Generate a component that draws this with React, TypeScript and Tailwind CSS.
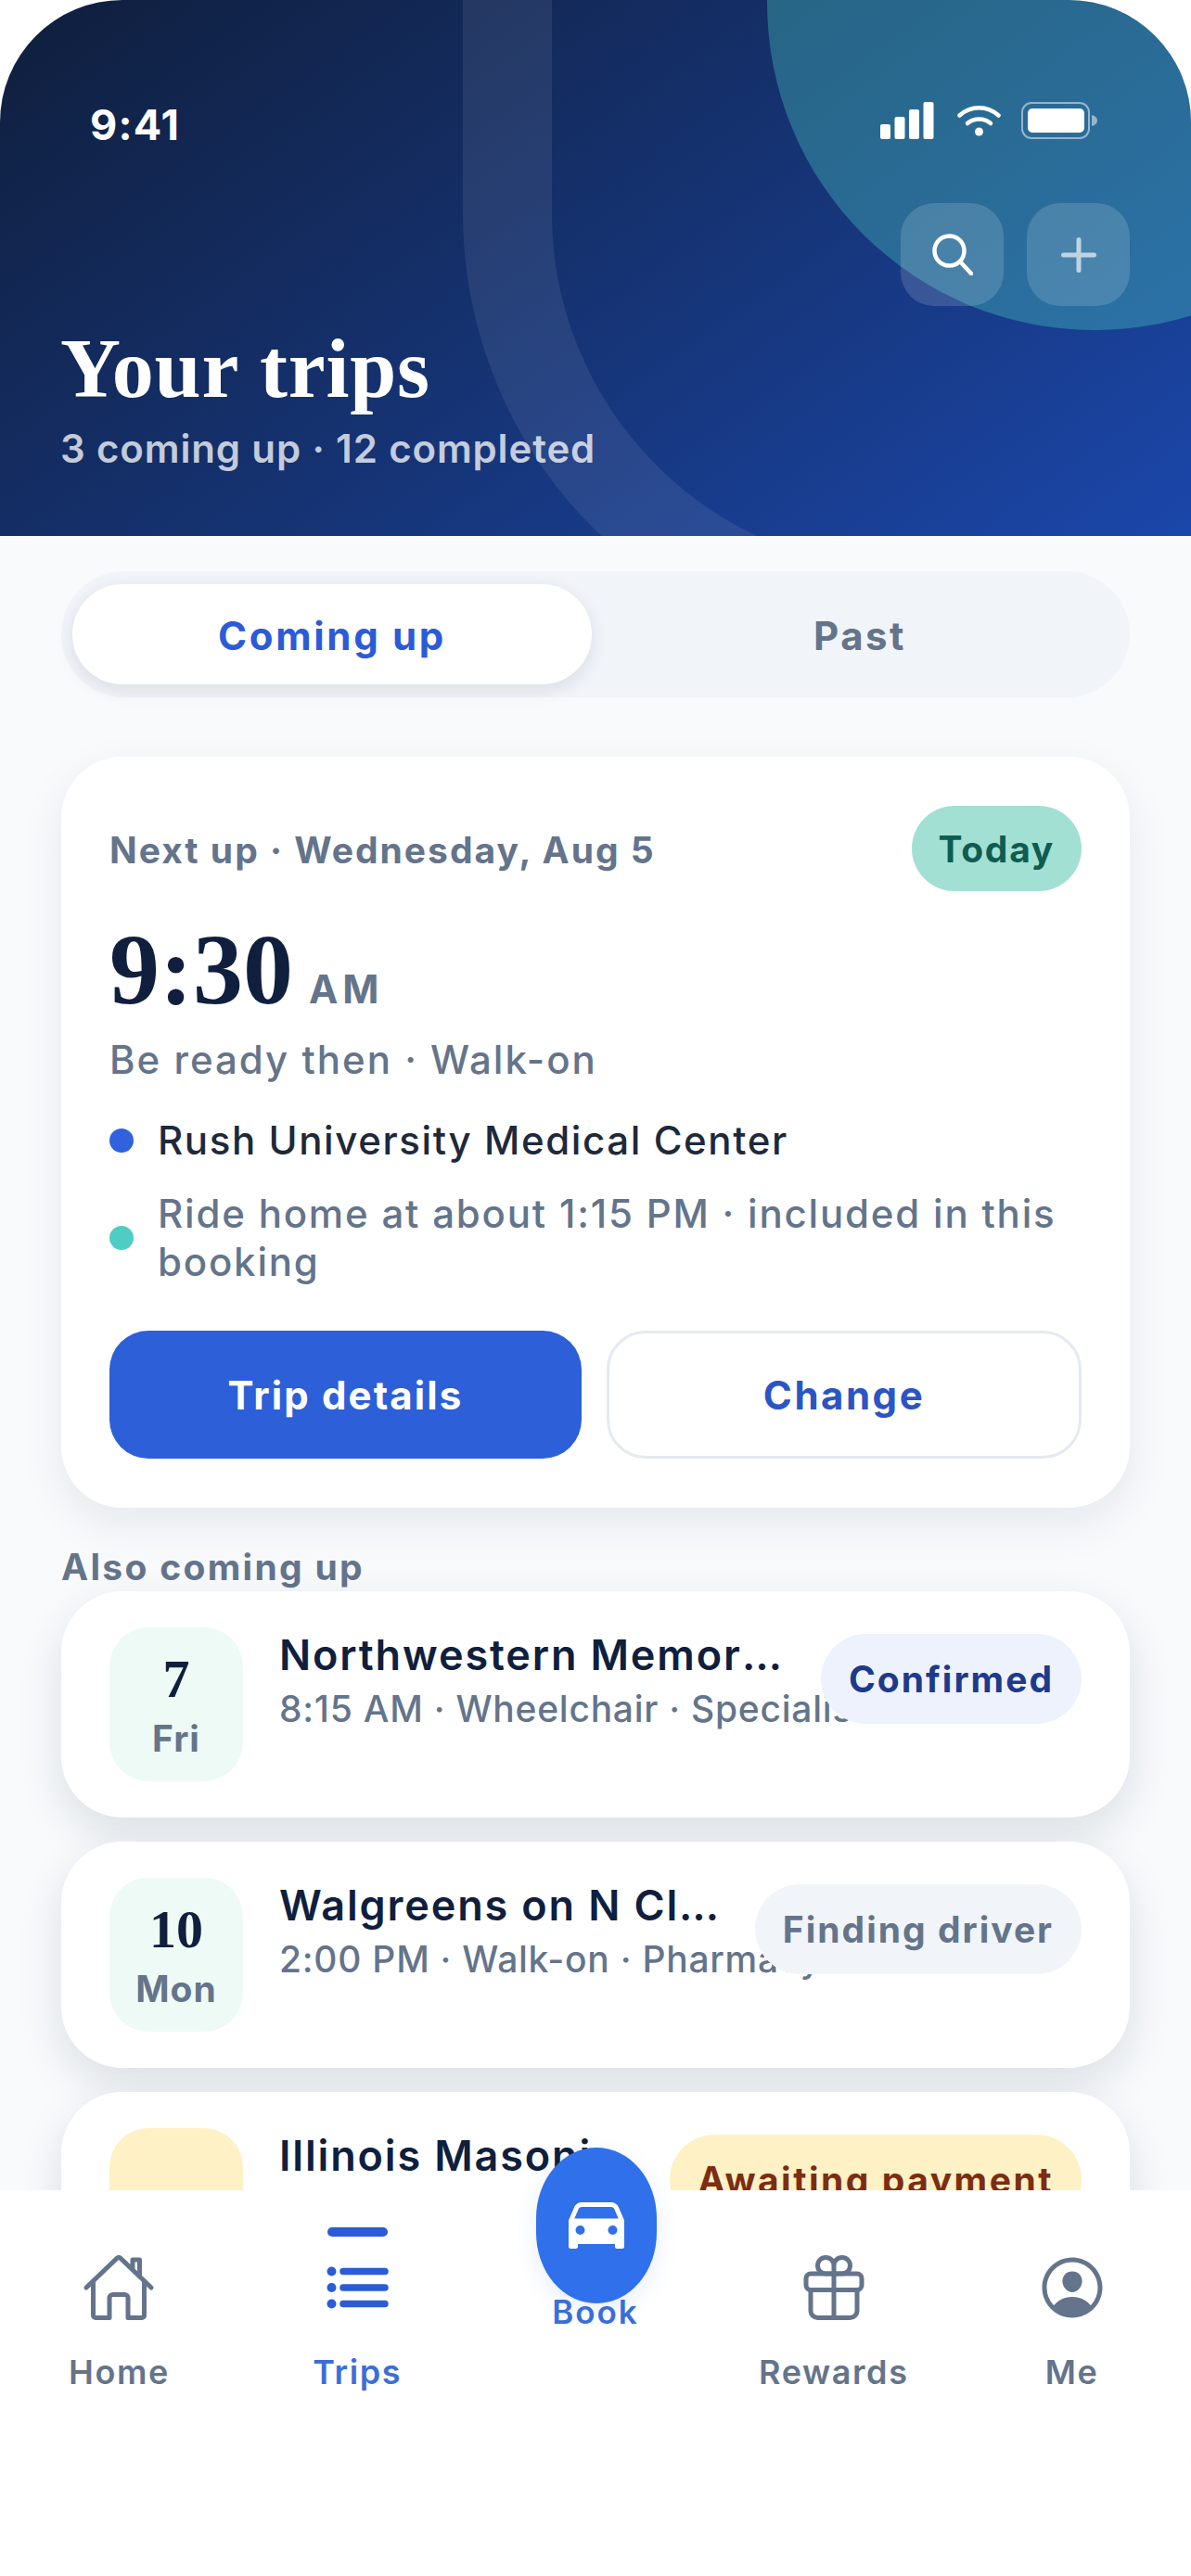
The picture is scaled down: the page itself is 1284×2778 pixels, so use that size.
import { IoCar, IoGiftOutline, IoHomeOutline, IoList, IoPersonCircleOutline } from 'react-icons/io5';
import type { IconType } from 'react-icons';

const sans = "font-['Inter','Liberation_Sans',sans-serif]";
const serif = "font-['Liberation_Serif',serif]";

interface TripRow {
  day?: string;
  weekday?: string;
  title: string;
  detail?: string;
  status: string;
  boxClass: string;
  pillClass: string;
}

const trips: TripRow[] = [
  {
    day: '7',
    weekday: 'Fri',
    title: 'Northwestern Memorial Hospital',
    detail: '8:15 AM · Wheelchair · Specialist',
    status: 'Confirmed',
    boxClass: 'bg-[#eefaf5]',
    pillClass: 'bg-[#eef2fd] text-[#1e3a8a] tracking-[2px]',
  },
  {
    day: '10',
    weekday: 'Mon',
    title: 'Walgreens on N Clark Street',
    detail: '2:00 PM · Walk-on · Pharmacy',
    status: 'Finding driver',
    boxClass: 'bg-[#eefaf5]',
    pillClass: 'bg-[#f1f4f9] text-[#64748b] tracking-[2px]',
  },
  {
    title: 'Illinois Masonic Medical Center',
    status: 'Awaiting payment',
    boxClass: 'bg-[#fdf1c5]',
    pillClass: 'bg-[#fdf1c5] text-[#7c2d12] tracking-[2.5px]',
  },
];

function StatusIcons() {
  return (
    <div className="flex items-center">
      <svg width="58" height="40" viewBox="0 0 58 40" fill="white">
        <rect x="0" y="24" width="11" height="16" rx="2" />
        <rect x="15.5" y="16" width="11" height="24" rx="2" />
        <rect x="31" y="8" width="11" height="32" rx="2" />
        <rect x="46.5" y="0" width="11" height="40" rx="2" />
      </svg>
      <svg className="ml-[25px]" width="47" height="35" viewBox="0 0 47 35" fill="none" stroke="white" strokeWidth="4.5" strokeLinecap="round">
        <path d="M2.5 11.5C14.5 .5 32.5 .5 44.5 11.5" />
        <path d="M11 20c7-6 18-6 25 0" />
        <circle cx="23.5" cy="29" r="4.5" fill="white" stroke="none" />
      </svg>
      <svg className="ml-[22px]" width="82" height="40" viewBox="0 0 82 40" fill="none">
        <rect x="1" y="1" width="72" height="38" rx="10" stroke="white" strokeOpacity="0.5" strokeWidth="2" />
        <rect x="7" y="7" width="61" height="26" rx="5" fill="white" />
        <path d="M76 14c4 1 6 3 6 6s-2 5-6 6z" fill="white" fillOpacity="0.5" />
      </svg>
    </div>
  );
}

function Trip({ trip }: { trip: TripRow }) {
  return (
    <div className="flex items-start gap-[30px] rounded-[66px] bg-white p-[39px_52px] shadow-[0_18px_48px_rgba(15,31,61,0.12)]">
      <div className={`mr-[9px] flex h-[166px] w-[144px] shrink-0 flex-col items-center rounded-[42px] pt-[25px] ${trip.boxClass}`}>
        <span className={`${serif} text-[58px] leading-[62px] font-bold text-[#0f1f3d]`}>{trip.day}</span>
        <span className="mt-[9px] text-[39px] leading-[48px] font-bold tracking-[1px] text-[#64748b]">{trip.weekday}</span>
      </div>
      <div className="min-w-0 flex-1 pt-[3px]">
        <div className="truncate text-[45px] leading-[54px] font-semibold tracking-[1.85px] text-[#0f1f3d]">{trip.title}</div>
        <div className="mt-[5px] text-[39px] leading-[52px] font-medium tracking-[0.75px] whitespace-nowrap text-[#64748b]">{trip.detail}</div>
      </div>
      <div className={`relative mt-[7px] flex h-[97px] shrink-0 items-center rounded-full px-[30px] pt-[2px] text-[39px] font-bold ${trip.pillClass}`}>
        {trip.status}
      </div>
    </div>
  );
}

function NavItem({ label, Icon, active }: { label: string; Icon: IconType; active?: boolean }) {
  return (
    <div className={`relative flex flex-col items-center pt-[63px] ${active ? 'text-[#2b5bd7]' : 'text-[#64748b]'}`}>
      {active ? <div className="absolute top-[40px] h-[10px] w-[65px] rounded-full bg-[#2b5bd7]" /> : null}
      <div className="flex h-[84px] items-center justify-center">
        <Icon size={80} />
      </div>
      <span className={`mt-[27px] text-[36px] leading-[44px] font-semibold tracking-[1.6px] ${active ? 'text-[#3b6fd8]' : ''}`}>{label}</span>
    </div>
  );
}

export default function App() {
  return (
    <div className="bg-white">
      <div className={`${sans} relative flex h-[2778px] w-[1284px] flex-col overflow-hidden rounded-[132px] bg-[#f8fafc]`}>
        <header className="relative h-[578px] shrink-0 overflow-hidden bg-linear-145 from-[#0f1e3c] to-[#1b47ab]">
          <div className="absolute top-[-300px] left-[499px] h-[1010px] w-[1200px] rounded-bl-[480px] border-[96px] border-white/[0.08]" />
          <div className="absolute top-[-350px] left-[827px] h-[706px] w-[706px] rounded-full bg-[#4ecdc4]/35" />

          <div className="relative flex h-[222px] items-start justify-between pt-[110px] pr-[101px] pl-[97px]">
            <span className="text-[45px] leading-[50px] font-bold tracking-[1.2px] text-white">9:41</span>
            <StatusIcons />
          </div>

          <div className="relative -mt-[3px] flex justify-end gap-[25px] pr-[66px]">
            <button type="button" className="flex h-[111px] w-[111px] items-center justify-center rounded-[36px] bg-white/[0.15]">
              <svg width="44" height="45" viewBox="0 0 44 45" fill="none" stroke="white" strokeWidth="4.5" strokeLinecap="round">
                <circle cx="18.5" cy="18.5" r="16" />
                <path d="M30 30l12 13" />
              </svg>
            </button>
            <button type="button" className="flex h-[111px] w-[111px] items-center justify-center rounded-[36px] bg-white/[0.15]">
              <svg width="38" height="38" viewBox="0 0 38 38" fill="none" stroke="white" strokeOpacity="0.65" strokeWidth="5" strokeLinecap="round">
                <path d="M19 2.5v33M2.5 19h33" />
              </svg>
            </button>
          </div>

          <div className="relative pl-[65px]">
            <h1 className={`${serif} mt-[13px] text-[90px] leading-[110px] font-bold tracking-[0.8px] text-white`}>Your trips</h1>
            <p className="mt-[6px] text-[42px] leading-[50px] font-semibold tracking-[0.85px] text-white/75">3 coming up · 12 completed</p>
          </div>
        </header>

        <main className="min-h-0 flex-1 overflow-hidden px-[66px] pt-[38px]">
          <div className="grid grid-cols-[560px_1fr] rounded-full bg-[#f1f4f9] px-[12px] py-[14px]">
            <div className="flex h-[108px] items-center justify-center rounded-full bg-white pt-[3px] text-[42px] font-bold tracking-[2.7px] text-[#2b5bd7] shadow-[0_6px_20px_rgba(15,31,61,0.1)]">
              Coming up
            </div>
            <div className="flex h-[108px] items-center justify-center pt-[3px] pl-[10px] text-[42px] font-bold tracking-[2.5px] text-[#64748b]">Past</div>
          </div>

          <section className="mt-[64px] rounded-[66px] bg-white p-[53px_52px] shadow-[0_18px_48px_rgba(15,31,61,0.08)]">
            <div className="flex items-center justify-between">
              <span className="pt-[4px] text-[39px] font-bold tracking-[2px] text-[#64748b]">Next up · Wednesday, Aug 5</span>
              <span className="flex h-[92px] items-center rounded-full bg-[#a3e0d4] px-[29px] pt-[3px] text-[39px] font-bold tracking-[1.7px] text-[#0f5c50]">Today</span>
            </div>
            <div className="mt-[23px] flex items-baseline gap-[17px]">
              <span className={`${serif} text-[108px] leading-[124px] font-bold text-[#0f1f3d]`}>9:30</span>
              <span className="text-[42px] font-bold tracking-[5px] text-[#64748b]">AM</span>
            </div>
            <p className="mt-[8px] text-[42px] leading-[54px] font-medium tracking-[2px] text-[#64748b]">Be ready then · Walk-on</p>
            <div className="mt-[34px] flex items-center gap-[26px]">
              <span className="h-[26px] w-[26px] shrink-0 rounded-full bg-[#2f62dc]" />
              <span className="text-[42px] leading-[52px] font-medium tracking-[1.6px] text-[#1e293b]">Rush University Medical Center</span>
            </div>
            <div className="mt-[27px] flex items-center gap-[26px]">
              <span className="h-[26px] w-[26px] shrink-0 rounded-full bg-[#4ecdc4]" />
              <span className="text-[42px] leading-[52px] font-medium tracking-[1.8px] text-[#64748b]">Ride home at about 1:15 PM · included in this booking</span>
            </div>
            <div className="mt-[48px] grid grid-cols-[509px_1fr] gap-[27px]">
              <button type="button" className="h-[138px] rounded-[42px] bg-[#2d5fd8] text-[42px] font-bold tracking-[2.1px] text-white">Trip details</button>
              <button type="button" className="h-[138px] rounded-[42px] border-[3px] border-[#e5e9f1] bg-white text-[42px] font-bold tracking-[2.5px] text-[#2b55c4]">Change</button>
            </div>
          </section>

          <h2 className="mt-[37px] text-[39px] leading-[53px] font-bold tracking-[2.3px] text-[#64748b]">Also coming up</h2>
          <div className="flex flex-col gap-[26px]">
            {trips.map((trip) => (
              <Trip key={trip.title} trip={trip} />
            ))}
          </div>
        </main>

        <nav className="relative z-10 grid h-[416px] shrink-0 grid-cols-5 bg-white">
          <NavItem label="Home" Icon={IoHomeOutline} />
          <NavItem label="Trips" Icon={IoList} active />
          <div className="flex flex-col items-center">
            <div className="relative z-10 -mt-[46px] ml-[2px] flex h-[168px] w-[130px] items-center justify-center rounded-[65px/76px] bg-[#3070ea] text-white shadow-[0_8px_24px_rgba(48,112,234,0.12)]">
              <IoCar size={80} />
            </div>
            <span className="-mt-[13px] text-[35px] leading-[44px] font-semibold tracking-[2px] text-[#3b6fd8]">Book</span>
          </div>
          <NavItem label="Rewards" Icon={IoGiftOutline} />
          <NavItem label="Me" Icon={IoPersonCircleOutline} />
        </nav>
      </div>
    </div>
  );
}
